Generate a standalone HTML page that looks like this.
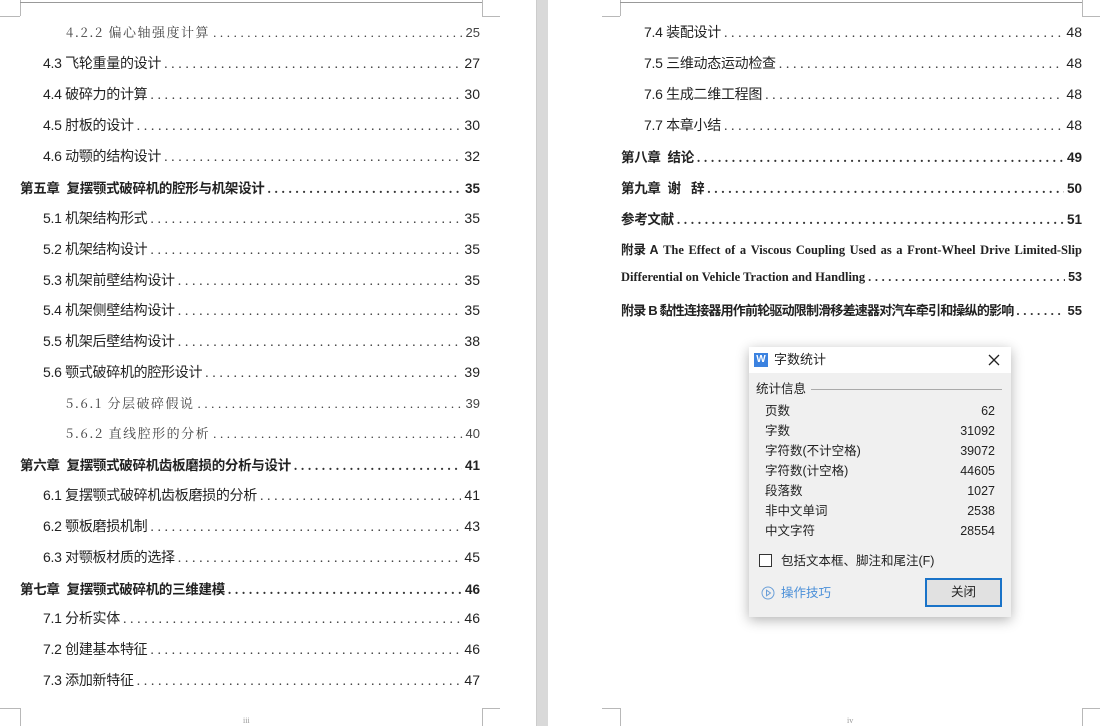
<!DOCTYPE html>
<html><head><meta charset="utf-8"><style>
*{margin:0;padding:0;box-sizing:border-box}
body{width:1103px;height:726px;background:#fff;position:relative;overflow:hidden;font-family:"Liberation Serif","Noto Serif CJK SC","Noto Sans CJK SC",serif;color:#222}
.strip{position:absolute;left:536px;top:0;width:12px;height:726px;background:#d9d9d9;border-left:1px solid #ccc}
.ln{position:absolute;background:#b8b8b8}
.row{position:absolute;display:flex;align-items:baseline;height:20px;font-size:14px;white-space:nowrap}
.row .t{font-family:"Liberation Sans","Noto Sans CJK SC",sans-serif;letter-spacing:-0.3px}
.row .d{flex:1;overflow:hidden;margin:0 3px;letter-spacing:3.6px;color:#333}
.row .d::after{content:"..................................................................................................................................................";}
.row .n{font-family:"Liberation Sans",sans-serif}
.l3{font-size:13px;color:#444}
.l3 .t{font-family:"Noto Serif CJK SC",serif;letter-spacing:1.5px}
.b{font-weight:bold;font-size:13.5px}
.b .t{font-family:"Liberation Sans","Noto Sans CJK SC",sans-serif}
.dlg{position:absolute;left:749px;top:347px;width:262px;height:270px;background:#f0f0f0;box-shadow:0 3px 12px rgba(0,0,0,.3);font-family:"Liberation Sans","Noto Sans CJK SC",sans-serif;font-size:12.5px;color:#222}
.dlg div{line-height:16px}
.dlg .tb{height:26px;background:#fff;position:relative}
.kv{position:absolute;left:16px;width:230px;height:16px;display:flex;justify-content:space-between;align-items:center}
.kv span{line-height:16px;display:block}
</style></head><body>
<div class="strip"></div>
<div class="ln" style="left:20px;top:0;width:1px;height:16px"></div>
<div class="ln" style="left:0;top:16px;width:20px;height:1px"></div>
<div class="ln" style="left:20px;top:2px;width:462px;height:1px;background:#999"></div>
<div class="ln" style="left:482px;top:0;width:1px;height:16px"></div>
<div class="ln" style="left:482px;top:16px;width:18px;height:1px"></div>
<div class="ln" style="left:20px;top:708px;width:1px;height:18px"></div>
<div class="ln" style="left:0;top:708px;width:20px;height:1px"></div>
<div class="ln" style="left:482px;top:708px;width:1px;height:18px"></div>
<div class="ln" style="left:482px;top:708px;width:18px;height:1px"></div>
<div style="position:absolute;left:243px;top:716px;font-size:8px;color:#999">iii</div>
<div class="ln" style="left:620px;top:0;width:1px;height:16px"></div>
<div class="ln" style="left:602px;top:16px;width:18px;height:1px"></div>
<div class="ln" style="left:620px;top:2px;width:462px;height:1px;background:#999"></div>
<div class="ln" style="left:1082px;top:0;width:1px;height:16px"></div>
<div class="ln" style="left:1082px;top:16px;width:18px;height:1px"></div>
<div class="ln" style="left:620px;top:708px;width:1px;height:18px"></div>
<div class="ln" style="left:602px;top:708px;width:18px;height:1px"></div>
<div class="ln" style="left:1082px;top:708px;width:1px;height:18px"></div>
<div class="ln" style="left:1082px;top:708px;width:18px;height:1px"></div>
<div style="position:absolute;left:847px;top:716px;font-size:8px;color:#999">iv</div>

<div class="row l3" style="left:66px;top:22px;width:414px"><span class="t">4.2.2 偏心轴强度计算</span><span class="d"></span><span class="n">25</span></div>
<div class="row" style="left:43px;top:53px;width:437px"><span class="t">4.3 飞轮重量的设计</span><span class="d"></span><span class="n">27</span></div>
<div class="row" style="left:43px;top:84px;width:437px"><span class="t">4.4 破碎力的计算</span><span class="d"></span><span class="n">30</span></div>
<div class="row" style="left:43px;top:115px;width:437px"><span class="t">4.5 肘板的设计</span><span class="d"></span><span class="n">30</span></div>
<div class="row" style="left:43px;top:146px;width:437px"><span class="t">4.6 动颚的结构设计</span><span class="d"></span><span class="n">32</span></div>
<div class="row b" style="left:20px;top:177px;width:460px"><span class="t">第五章&nbsp; 复摆颚式破碎机的腔形与机架设计</span><span class="d"></span><span class="n">35</span></div>
<div class="row" style="left:43px;top:208px;width:437px"><span class="t">5.1 机架结构形式</span><span class="d"></span><span class="n">35</span></div>
<div class="row" style="left:43px;top:239px;width:437px"><span class="t">5.2 机架结构设计</span><span class="d"></span><span class="n">35</span></div>
<div class="row" style="left:43px;top:270px;width:437px"><span class="t">5.3 机架前壁结构设计</span><span class="d"></span><span class="n">35</span></div>
<div class="row" style="left:43px;top:300px;width:437px"><span class="t">5.4 机架侧壁结构设计</span><span class="d"></span><span class="n">35</span></div>
<div class="row" style="left:43px;top:331px;width:437px"><span class="t">5.5 机架后壁结构设计</span><span class="d"></span><span class="n">38</span></div>
<div class="row" style="left:43px;top:362px;width:437px"><span class="t">5.6 颚式破碎机的腔形设计</span><span class="d"></span><span class="n">39</span></div>
<div class="row l3" style="left:66px;top:393px;width:414px"><span class="t">5.6.1 分层破碎假说</span><span class="d"></span><span class="n">39</span></div>
<div class="row l3" style="left:66px;top:423px;width:414px"><span class="t">5.6.2 直线腔形的分析</span><span class="d"></span><span class="n">40</span></div>
<div class="row b" style="left:20px;top:454px;width:460px"><span class="t">第六章&nbsp; 复摆颚式破碎机齿板磨损的分析与设计</span><span class="d"></span><span class="n">41</span></div>
<div class="row" style="left:43px;top:485px;width:437px"><span class="t">6.1 复摆颚式破碎机齿板磨损的分析</span><span class="d"></span><span class="n">41</span></div>
<div class="row" style="left:43px;top:516px;width:437px"><span class="t">6.2 颚板磨损机制</span><span class="d"></span><span class="n">43</span></div>
<div class="row" style="left:43px;top:547px;width:437px"><span class="t">6.3 对颚板材质的选择</span><span class="d"></span><span class="n">45</span></div>
<div class="row b" style="left:20px;top:578px;width:460px"><span class="t">第七章&nbsp; 复摆颚式破碎机的三维建模</span><span class="d"></span><span class="n">46</span></div>
<div class="row" style="left:43px;top:608px;width:437px"><span class="t">7.1 分析实体</span><span class="d"></span><span class="n">46</span></div>
<div class="row" style="left:43px;top:639px;width:437px"><span class="t">7.2 创建基本特征</span><span class="d"></span><span class="n">46</span></div>
<div class="row" style="left:43px;top:670px;width:437px"><span class="t">7.3 添加新特征</span><span class="d"></span><span class="n">47</span></div>

<div class="row" style="left:644px;top:22px;width:438px"><span class="t">7.4 装配设计</span><span class="d"></span><span class="n">48</span></div>
<div class="row" style="left:644px;top:53px;width:438px"><span class="t">7.5 三维动态运动检查</span><span class="d"></span><span class="n">48</span></div>
<div class="row" style="left:644px;top:84px;width:438px"><span class="t">7.6 生成二维工程图</span><span class="d"></span><span class="n">48</span></div>
<div class="row" style="left:644px;top:115px;width:438px"><span class="t">7.7 本章小结</span><span class="d"></span><span class="n">48</span></div>
<div class="row b" style="left:621px;top:146px;width:461px"><span class="t">第八章&nbsp; 结论</span><span class="d"></span><span class="n">49</span></div>
<div class="row b" style="left:621px;top:177px;width:461px"><span class="t">第九章&nbsp; 谢&nbsp;&nbsp; 辞</span><span class="d"></span><span class="n">50</span></div>
<div class="row b" style="left:621px;top:208px;width:461px"><span class="t">参考文献</span><span class="d"></span><span class="n">51</span></div>
<div class="row b" style="left:621px;top:239px;width:461px;font-family:'Liberation Serif',serif;font-size:12.5px;justify-content:space-between"><span style="font-family:'Liberation Sans','Noto Sans CJK SC',sans-serif">附录 A</span><span>The</span><span>Effect</span><span>of</span><span>a</span><span>Viscous</span><span>Coupling</span><span>Used</span><span>as</span><span>a</span><span>Front-Wheel</span><span>Drive</span><span>Limited-Slip</span></div>
<div class="row b" style="left:621px;top:270px;width:461px;font-size:12.5px"><span style="font-family:'Liberation Serif',serif">Differential on Vehicle Traction and Handling</span><span class="d"></span><span class="n">53</span></div>
<div class="row b" style="left:621px;top:300px;width:461px;font-size:13px"><span class="t" style="letter-spacing:-0.8px">附录 B 黏性连接器用作前轮驱动限制滑移差速器对汽车牵引和操纵的影响</span><span class="d"></span><span class="n">55</span></div>

<div class="dlg">
 <div class="tb">
  <div style="position:absolute;left:5px;top:6px;width:14px;height:14px;background:#3b82e0;color:#fff;font-size:10px;font-weight:bold;text-align:center;line-height:14px">W</div>
  <div style="position:absolute;left:25px;top:5px;font-size:13px">字数统计</div>
  <svg style="position:absolute;left:239px;top:7px" width="12" height="12"><path d="M1 1L11 11M11 1L1 11" stroke="#222" stroke-width="1.3"/></svg>
 </div>
 <div style="position:absolute;left:7px;top:34px">统计信息</div>
 <div style="position:absolute;left:62px;top:42px;width:191px;height:1px;background:#aaa"></div>
 <div class="kv" style="top:56px"><span>页数</span><span>62</span></div>
 <div class="kv" style="top:76px"><span>字数</span><span>31092</span></div>
 <div class="kv" style="top:96px"><span>字符数(不计空格)</span><span>39072</span></div>
 <div class="kv" style="top:116px"><span>字符数(计空格)</span><span>44605</span></div>
 <div class="kv" style="top:136px"><span>段落数</span><span>1027</span></div>
 <div class="kv" style="top:156px"><span>非中文单词</span><span>2538</span></div>
 <div class="kv" style="top:176px"><span>中文字符</span><span>28554</span></div>
 <div style="position:absolute;left:10px;top:207px;width:13px;height:13px;border:1px solid #333;background:#fff"></div>
 <div style="position:absolute;left:32px;top:206px">包括文本框、脚注和尾注(F)</div>
 <svg style="position:absolute;left:12px;top:239px" width="14" height="14"><circle cx="7" cy="7" r="6" fill="none" stroke="#6a9fd8"/><path d="M5.5 4.2L9.5 7L5.5 9.8Z" fill="none" stroke="#6a9fd8"/></svg>
 <div style="position:absolute;left:32px;top:238px;color:#4a8fd8">操作技巧</div>
 <div style="position:absolute;left:176px;top:231px;width:77px;height:29px;border:2px solid #1a73c8;background:#e1e1e1;text-align:center;line-height:25px">关闭</div>
</div>
</body></html>
